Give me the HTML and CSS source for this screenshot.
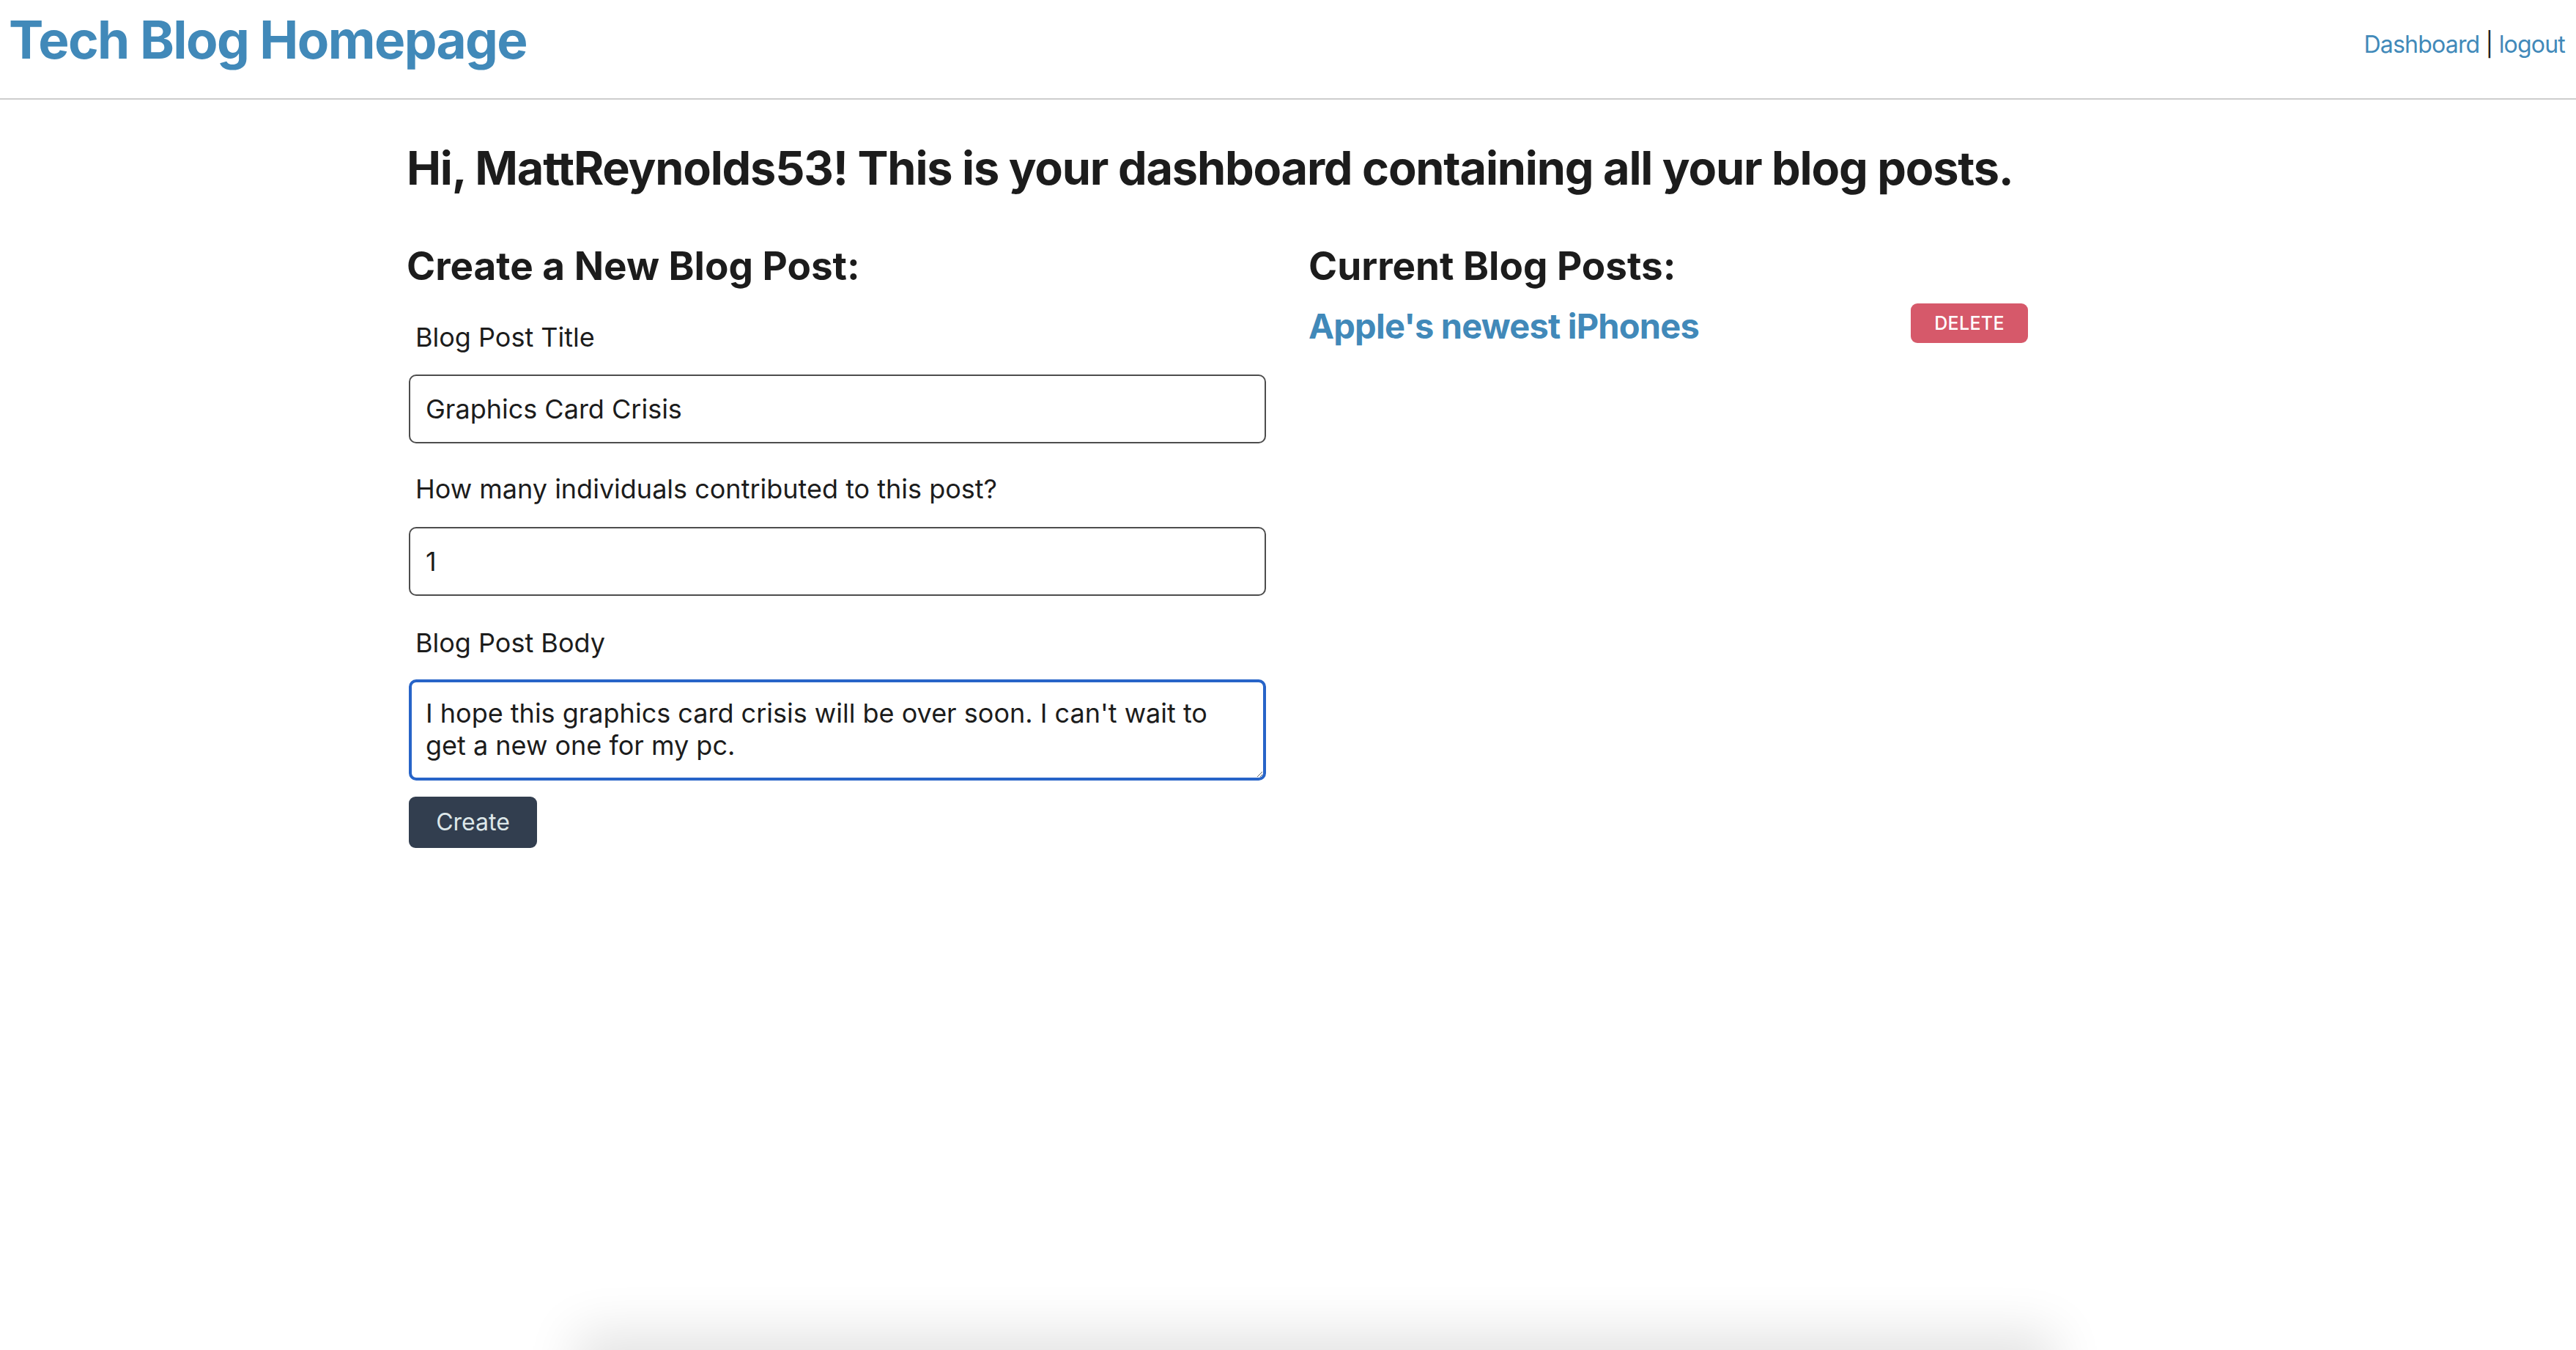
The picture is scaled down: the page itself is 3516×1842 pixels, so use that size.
FILE: index.html
```html
<!DOCTYPE html>
<html lang="en">
<head>
<meta charset="utf-8">
<title>Tech Blog Homepage</title>
<link rel="stylesheet" href="styles.css">
</head>
<body>
<div class="page">
  <header class="site-header">
    <h1 class="site-title">Tech Blog Homepage</h1>
    <nav class="site-nav"><a href="#">Dashboard</a> | <a href="#">logout</a></nav>
  </header>
  <main class="dashboard">
    <h2 class="welcome">Hi, MattReynolds53! This is your dashboard containing all your blog posts.</h2>
    <div class="columns">
      <section class="create-col">
        <h3 class="section-title">Create a New Blog Post:</h3>
        <form class="post-form">
          <label class="field-label" for="title">Blog Post Title</label>
          <input class="field-input" id="title" type="text" value="Graphics Card Crisis">
          <label class="field-label gap-lg" for="contributors">How many individuals contributed to this post?</label>
          <input class="field-input" id="contributors" type="text" value="1">
          <label class="field-label gap-lg" for="body">Blog Post Body</label>
          <textarea class="field-textarea" id="body">I hope this graphics card crisis will be over soon. I can't wait to get a new one for my pc.</textarea>
          <button class="create-btn" type="button">Create</button>
        </form>
      </section>
      <section class="posts-col">
        <h3 class="section-title">Current Blog Posts:</h3>
        <div class="post-row">
          <a class="post-link" href="#">Apple's newest iPhones</a>
          <button class="delete-btn" type="button">DELETE</button>
        </div>
      </section>
    </div>
  </main>
  <footer class="site-footer"></footer>
</div>
</body>
</html>
```
FILE: styles.css
```css
html, body {
  margin: 0;
  padding: 0;
  background: #ffffff;
}
body {
  font-family: Inter, "Noto Sans", "Liberation Sans", sans-serif;
  color: #1c1c1c;
}
.page {
  height: 100vh;
  display: flex;
  flex-direction: column;
  overflow: hidden;
}
.site-header {
  box-sizing: border-box;
  flex: none;
  height: 136px;
  border-bottom: 2px solid #cdcdcd;
  display: flex;
  justify-content: space-between;
  align-items: flex-start;
  padding: 19px 15px 0 12px;
}
.site-title {
  margin: 0;
  font-size: 71px;
  line-height: 71px;
  font-weight: 700;
  color: #4189b9;
  letter-spacing: -1.6px;
}
.site-nav {
  margin-top: 26px;
  font-size: 32px;
  line-height: 32px;
  letter-spacing: -0.8px;
  color: #1c1c1c;
}
.site-nav a {
  color: #4189b9;
  text-decoration: none;
}
.dashboard {
  box-sizing: border-box;
  flex: none;
  height: calc(100vh - 136px);
  padding: 62px 0 0 555px;
}
.welcome {
  margin: 0 0 76px 0;
  font-size: 63px;
  line-height: 63px;
  font-weight: 700;
  letter-spacing: -1.2px;
  color: #1c1c1c;
}
.columns {
  display: grid;
  grid-template-columns: 1173px 982px;
  column-gap: 58px;
}
.section-title {
  margin: 0;
  font-size: 53px;
  line-height: 53px;
  font-weight: 700;
  color: #1c1c1c;
}
.post-form {
  display: flex;
  flex-direction: column;
  align-items: flex-start;
  padding-left: 3px;
}
.field-label {
  display: block;
  margin: 52px 0 33px 9px;
  font-size: 36px;
  line-height: 36px;
  color: #1c1c1c;
}
.field-label.gap-lg {
  margin-top: 44px;
  margin-bottom: 34px;
}
.field-label.gap-lg:nth-of-type(3) {
  margin-top: 46px;
  margin-bottom: 32px;
}
.field-input {
  box-sizing: border-box;
  width: 1170px;
  height: 94px;
  border: 2px solid #4d4d4d;
  border-radius: 10px;
  padding: 0 21px;
  font-family: inherit;
  font-size: 36px;
  line-height: 43.5px;
  color: #1c1c1c;
  background: #ffffff;
  outline: none;
}
.field-textarea {
  box-sizing: border-box;
  width: 1170px;
  height: 138px;
  border: 4px solid #2764c8;
  border-radius: 10px;
  padding: 21px 19px;
  font-family: inherit;
  font-size: 36px;
  line-height: 43.5px;
  color: #1c1c1c;
  background: #ffffff;
  outline: none;
  display: block;
}
.create-btn {
  margin-top: 22px;
  width: 175px;
  height: 70px;
  border: none;
  border-radius: 9px;
  background: #323e4f;
  color: #dde7e9;
  font-family: inherit;
  font-size: 32px;
  line-height: 32px;
  padding: 0;
}
.post-row {
  margin-top: 24px;
  display: flex;
  justify-content: space-between;
  align-items: flex-start;
}
.post-link {
  margin-top: 7px;
  font-size: 47px;
  line-height: 47px;
  font-weight: 700;
  letter-spacing: -0.8px;
  color: #4189b9;
  text-decoration: none;
}
.delete-btn {
  width: 160px;
  height: 54px;
  border: none;
  border-radius: 9px;
  background: #d6596a;
  color: #ffffff;
  font-family: inherit;
  font-size: 25px;
  line-height: 25px;
  font-weight: 500;
  letter-spacing: 0.3px;
  padding: 0;
}
.site-footer {
  flex: none;
  height: 120px;
  margin-left: 785px;
  width: 2020px;
  background: #ffffff;
  box-shadow: 0 -25px 70px rgba(0, 0, 0, 0.11);
}
```
